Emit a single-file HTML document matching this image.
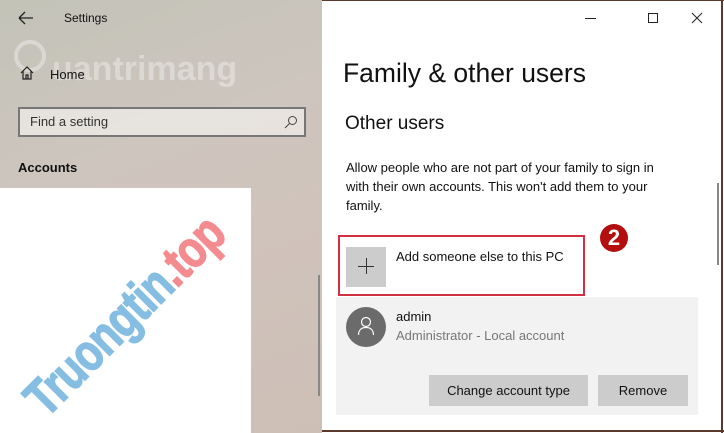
<!DOCTYPE html>
<html><head><meta charset="utf-8"><style>
*{margin:0;padding:0;box-sizing:border-box}
body{width:724px;height:433px;overflow:hidden;position:relative;font-family:"Liberation Sans",sans-serif;background:#fff}
.left{position:absolute;left:0;top:0;width:322px;height:433px;background:linear-gradient(160deg,#c3c3b8 0%,#cdc5be 35%,#d0c3bb 60%,#cdbfb6 100%)}
.abs{position:absolute}
.right{position:absolute;left:322px;top:0;width:402px;height:433px;background:#fff}
</style></head><body>
<div class="left">
  <svg class="abs" style="left:18px;top:11px" width="16" height="14"><path d="M1 7H15M1 7L7 1M1 7L7 13" stroke="#222" stroke-width="1.3" fill="none"/></svg>
  <div class="abs" style="left:64px;top:11px;font-size:12px;color:#111">Settings</div>
  <div class="abs" style="left:14px;top:40px;width:32px;height:32px;border:4px solid rgba(255,255,255,.35);border-radius:50%"></div>
  <div class="abs" style="left:52px;top:50px;font-size:34px;font-weight:bold;color:rgba(255,255,255,.35)">uantrimang</div>
  <svg class="abs" style="left:20px;top:66px" width="14" height="14"><path d="M1 7L7 1L13 7M3 5V13H11V5M6 13V9H8V13" stroke="#222" stroke-width="1.2" fill="none"/></svg>
  <div class="abs" style="left:50px;top:67px;font-size:13px;color:#111">Home</div>
  <div class="abs" style="left:18px;top:107px;width:288px;height:30px;border:2px solid #777;background:rgba(235,232,228,.85)"></div>
  <div class="abs" style="left:30px;top:114px;font-size:13px;color:#333">Find a setting</div>
  <svg class="abs" style="left:284px;top:115px" width="14" height="14"><circle cx="8.5" cy="5.5" r="4" stroke="#444" fill="none"/><path d="M5.5 8.5L1 13" stroke="#444"/></svg>
  <div class="abs" style="left:18px;top:160px;font-size:13px;font-weight:bold;color:#111">Accounts</div>
  <div class="abs" style="left:318px;top:275px;width:2px;height:121px;background:#888"></div>
  <div class="abs" style="left:0;top:188px;width:251px;height:245px;background:#fff;overflow:hidden">
    <div class="abs" style="left:-60px;top:98px;width:370px;transform:rotate(-45deg) scaleX(0.8);font-size:52px;font-weight:bold;white-space:nowrap;letter-spacing:-1px;text-align:center;-webkit-text-stroke:1.5px currentColor"><span style="color:#86bde3">Truongtin</span><span style="color:#f48b8f">.top</span></div>
  </div>
</div>
<div class="right">
  <div class="abs" style="left:0;top:0;width:402px;height:1px;background:#5a3a2a"></div>
  <div class="abs" style="left:399px;top:0;width:2px;height:433px;background:#5a3a2a"></div>
  <div class="abs" style="left:0;top:430px;width:402px;height:2px;background:#5a3a2a"></div>
  <div class="abs" style="left:263px;top:18px;width:11px;height:1px;background:#222"></div>
  <div class="abs" style="left:326px;top:13px;width:10px;height:10px;border:1px solid #222"></div>
  <svg class="abs" style="left:369px;top:12px" width="12" height="12"><path d="M1 1L11 11M11 1L1 11" stroke="#222" stroke-width="1"/></svg>
  <div class="abs" style="left:21px;top:58px;font-size:26.5px;color:#111">Family &amp; other users</div>
  <div class="abs" style="left:23px;top:113px;font-size:19px;color:#111">Other users</div>
  <div class="abs" style="left:24px;top:158px;width:330px;font-size:13px;line-height:19px;color:#111">Allow people who are not part of your family to sign in with their own accounts. This won't add them to your family.</div>
  <div class="abs" style="left:395px;top:183px;width:2px;height:82px;background:#888"></div>
  <div class="abs" style="left:16px;top:235px;width:247px;height:61px;border:2px solid #d0303f"></div>
  <div class="abs" style="left:24px;top:247px;width:40px;height:40px;background:#ccc"></div>
  <div class="abs" style="left:36px;top:266px;width:16px;height:1px;background:#333"></div>
  <div class="abs" style="left:44px;top:258px;width:1px;height:16px;background:#333"></div>
  <div class="abs" style="left:74px;top:249px;font-size:13px;color:#111">Add someone else to this PC</div>
  <div class="abs" style="left:278px;top:224px;width:28px;height:28px;border-radius:50%;background:#b30f0f;color:#fff;font-weight:bold;font-size:22px;line-height:28px;text-align:center">2</div>
  <div class="abs" style="left:14px;top:297px;width:362px;height:118px;background:#f2f2f2"></div>
  <div class="abs" style="left:24px;top:307px;width:40px;height:40px;border-radius:50%;background:#6b6b6b"></div>
  <svg class="abs" style="left:35px;top:316px" width="18" height="20"><circle cx="9" cy="6" r="4.5" stroke="#fff" stroke-width="1.2" fill="none"/><path d="M1.5 19C1.5 14 4.5 11.5 9 11.5S16.5 14 16.5 19" stroke="#fff" stroke-width="1.2" fill="none"/></svg>
  <div class="abs" style="left:74px;top:309px;font-size:13px;color:#111">admin</div>
  <div class="abs" style="left:74px;top:328px;font-size:13px;color:#777">Administrator - Local account</div>
  <div class="abs" style="left:107px;top:375px;width:159px;height:31px;background:#ccc;font-size:13px;line-height:31px;text-align:center;color:#111">Change account type</div>
  <div class="abs" style="left:276px;top:375px;width:90px;height:31px;background:#ccc;font-size:13px;line-height:31px;text-align:center;color:#111">Remove</div>
</div>
</body></html>
